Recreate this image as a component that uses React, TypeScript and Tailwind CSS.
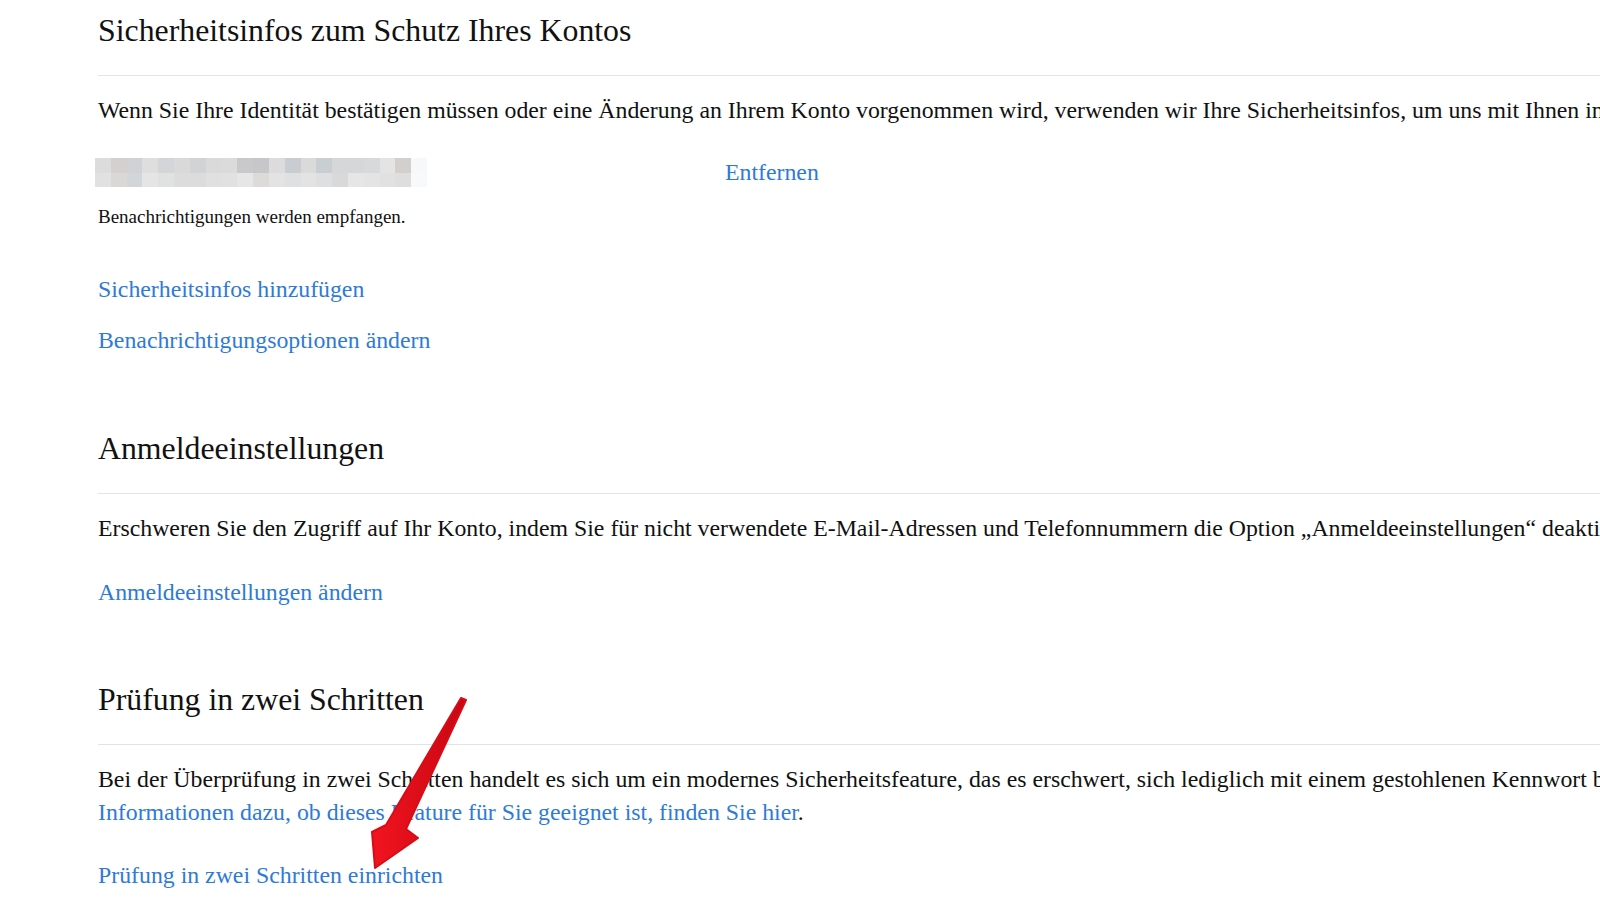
const top = [
  "#dcdcdc", "#d3d0ce", "#d0d3d6", "#dedede", "#d3d5d8", "#d9d9da", "#d2d3d4", "#dadada", "#dbdbdb",
  "#c9c8ca", "#c7c6c8", "#dcdcdc", "#c9cdd1", "#dadada", "#c9ced3", "#d6d7d9", "#d6d7d8", "#d8d9db",
  "#e4e4e4", "#d2cfcc", "#f6f8fa",
];
const bottom = [
  "#e1e1e1", "#d9d8d6", "#d3d6d9", "#e5e5e6", "#e0e1e1", "#dcdcdc", "#dcdcdc", "#e0e0e0", "#e1e1e1",
  "#e6e6e6", "#dddbd8", "#e3e3e3", "#dfe0e1", "#e3e3e3", "#dedfe0", "#d9d9d9", "#e6e6e6", "#e4e4e4",
  "#e1e1e1", "#dedede", "#f7f9fb",
];

// verpixelte Telefonnummer
function Blurred() {
  return (
    <div className="flex h-[29px] w-[332px] flex-col overflow-hidden blur-[0.6px]">
      <div className="flex h-[15px]">
        {top.map((c, i) => (
          <div key={i} className="h-full flex-1" style={{ background: c }} />
        ))}
      </div>
      <div className="flex h-[14px]">
        {bottom.map((c, i) => (
          <div key={i} className="h-full flex-1" style={{ background: c }} />
        ))}
      </div>
    </div>
  );
}

function Heading({ children }: { children: React.ReactNode }) {
  return (
    <>
      <h2 className="h-[38px] whitespace-nowrap text-[31.8px] leading-[38px] text-[#111]">{children}</h2>
      <div className="mt-[25px] border-t border-[#e3e3e3]" />
    </>
  );
}

function A({ children, className = "" }: { children: React.ReactNode; className?: string }) {
  return (
    <a href="#" className={"whitespace-nowrap text-[#2e7ad8] " + className}>
      {children}
    </a>
  );
}

export default function App() {
  return (
    <div
      className="relative h-[900px] w-[1600px] overflow-hidden bg-white pl-[98px] pt-[12px] text-[23.8px] leading-[33px] text-[#111]"
      style={{ fontFamily: '"Liberation Serif", "Times New Roman", serif' }}
    >
      {/* Sicherheitsinfos */}
      <Heading>Sicherheitsinfos zum Schutz Ihres Kontos</Heading>
      <p className="mt-[18px] whitespace-nowrap">
        Wenn Sie Ihre Identität bestätigen müssen oder eine Änderung an Ihrem Konto vorgenommen wird, verwenden wir Ihre
        Sicherheitsinfos, um uns mit Ihnen in Verbindung zu setzen.
      </p>
      <div className="mt-[31px] -ml-[3px] grid h-[29px] grid-cols-[630px_auto] items-center">
        <Blurred />
        <A className="leading-[29px]">Entfernen</A>
      </div>
      <div className="mt-[19px] text-[19px] leading-[22px]">Benachrichtigungen werden empfangen.</div>
      <div className="mt-[45px]">
        <A>Sicherheitsinfos hinzufügen</A>
      </div>
      <div className="mt-[18px]">
        <A>Benachrichtigungsoptionen ändern</A>
      </div>

      {/* Anmeldeeinstellungen */}
      <div className="mt-[73px]">
        <Heading>Anmeldeeinstellungen</Heading>
      </div>
      <p className="mt-[18px] whitespace-nowrap">
        Erschweren Sie den Zugriff auf Ihr Konto, indem Sie für nicht verwendete E-Mail-Adressen und Telefonnummern die
        Option „Anmeldeeinstellungen“ deaktivieren.
      </p>
      <div className="mt-[31px]">
        <A>Anmeldeeinstellungen ändern</A>
      </div>

      {/* Prüfung in zwei Schritten */}
      <div className="mt-[72px]">
        <Heading>Prüfung in zwei Schritten</Heading>
      </div>
      <p className="mt-[18px] whitespace-nowrap">
        Bei der Überprüfung in zwei Schritten handelt es sich um ein modernes Sicherheitsfeature, das es erschwert, sich
        lediglich mit einem gestohlenen Kennwort bei Ihrem Konto anzumelden.
      </p>
      <p className="whitespace-nowrap">
        <A>Informationen dazu, ob dieses Feature für Sie geeignet ist, finden Sie hier</A>.
      </p>
      <div className="mt-[30px]">
        <A>Prüfung in zwei Schritten einrichten</A>
      </div>

      {/* roter Pfeil (Annotation) */}
      <svg className="pointer-events-none absolute left-0 top-0" width="1600" height="900" viewBox="0 0 1600 900">
        <defs>
          <linearGradient id="arrow" x1="0" y1="0" x2="1" y2="0">
            <stop offset="0" stopColor="#f2141f" />
            <stop offset="1" stopColor="#c70712" />
          </linearGradient>
        </defs>
        <polygon
          points="461,698 466,700 406,829 418,838 375,868 372,832 386,825"
          fill="url(#arrow)"
          stroke="#d80c16"
          strokeWidth="2"
          strokeLinejoin="round"
        />
      </svg>
    </div>
  );
}
